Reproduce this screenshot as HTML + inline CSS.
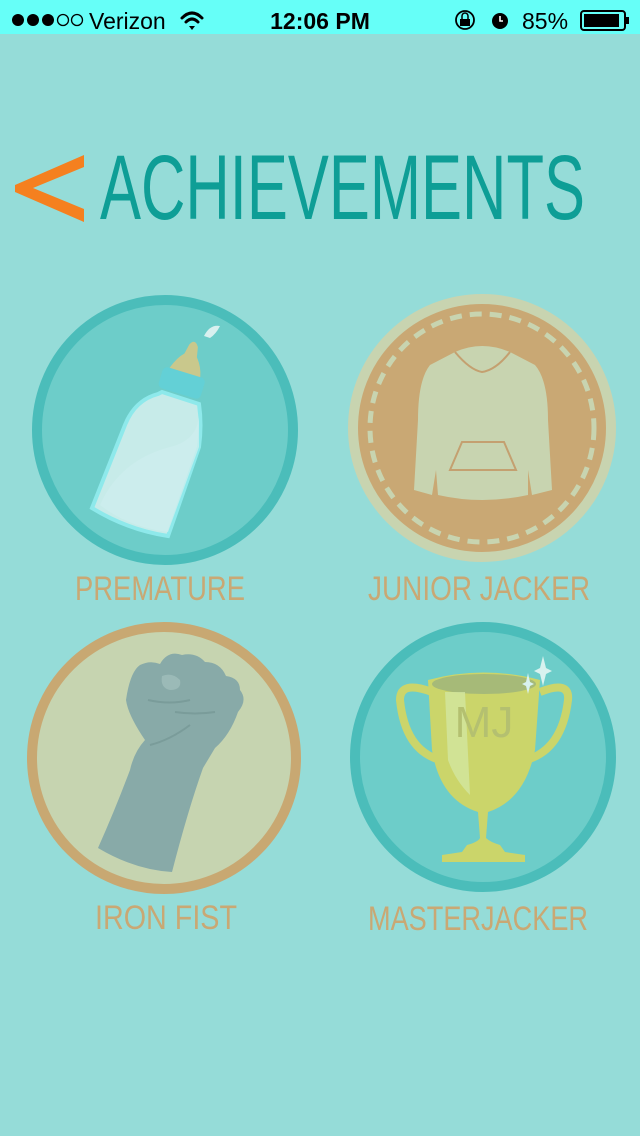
<!DOCTYPE html>
<html><head><meta charset="utf-8"><style>
html,body{margin:0;padding:0;width:640px;height:1136px;overflow:hidden;background:#95dcd8;font-family:"Liberation Sans",sans-serif}
</style></head><body>
<svg width="640" height="1136" viewBox="0 0 640 1136" xmlns="http://www.w3.org/2000/svg" style="position:absolute;left:0;top:0">
<rect x="0" y="0" width="640" height="1136" fill="#95dcd8"/>
<rect x="0" y="0" width="640" height="34" fill="#66fff8"/>
<g fill="#000">
<circle cx="18" cy="20" r="6"/><circle cx="33" cy="20" r="6"/><circle cx="48" cy="20" r="6"/>
</g>
<g fill="none" stroke="#000" stroke-width="1.3"><circle cx="63" cy="20" r="5.5"/><circle cx="77" cy="20" r="5.5"/></g>
<text x="89" y="29" font-size="23" fill="#000">Verizon</text>
<g fill="none" stroke="#000" stroke-width="3" stroke-linecap="round">
<path d="M182 18 Q192 8 202 18"/><path d="M186 22 Q192 16 198 22"/>
</g>
<path d="M189 26 L192 30 L195 26 Z" fill="#000"/>
<text x="320" y="29" font-size="23" font-weight="bold" fill="#000" text-anchor="middle">12:06 PM</text>
<circle cx="465" cy="20" r="9" fill="none" stroke="#000" stroke-width="1.8"/>
<rect x="460" y="19" width="10" height="7" fill="#000"/>
<path d="M462 19 V16 A3 3 0 0 1 468 16 V19" fill="none" stroke="#000" stroke-width="1.5"/>
<circle cx="500" cy="21" r="8" fill="#000"/>
<path d="M500 16 V21 H503" stroke="#fff" stroke-width="1.6" fill="none"/>
<text x="522" y="29" font-size="23" fill="#000">85%</text>
<rect x="581" y="11" width="44" height="19" rx="3" fill="none" stroke="#000" stroke-width="2"/>
<rect x="584" y="14" width="35" height="13" fill="#000"/>
<rect x="626" y="17" width="3" height="7" fill="#000"/>

<path d="M84 155 L84 167 L33 188 L84 209 L84 222 L15 192 L15 185 Z" fill="#f5801f"/>
<text x="100" y="219" font-size="92" fill="#0e9e96" textLength="485" lengthAdjust="spacingAndGlyphs">ACHIEVEMENTS</text>

<ellipse cx="165" cy="430" rx="128" ry="130" fill="#6dcdc9" stroke="#4bbdba" stroke-width="10"/>
<path d="M92 508 L125 425 Q135 400 158 394 L162 392 L199 404 Q202 425 199 447 L168 536 Q128 530 92 508 Z" fill="#c7ebe9" stroke="#8ee9eb" stroke-width="4"/>
<path d="M100 505 Q120 460 170 447 Q200 440 199 410 L199 447 L168 532 Q128 527 100 505Z" fill="#cdeeed" opacity="0.8"/>
<g transform="rotate(17 182 382)">
<rect x="160" y="372" width="44" height="22" rx="5" fill="#63d0d6"/>
<path d="M166 372 Q170 360 176 354 L178 344 Q182 336 187 344 L189 354 Q196 362 198 372 Z" fill="#c9c88c"/>
</g>
<path d="M204 336 Q210 324 220 326 Q216 334 210 338 Z" fill="#d8f0ef"/>
<text x="160" y="600" font-size="34" fill="#c9a874" text-anchor="middle" textLength="170" lengthAdjust="spacingAndGlyphs">PREMATURE</text>

<ellipse cx="482" cy="428" rx="129" ry="129" fill="#c9a874" stroke="#c8d4b0" stroke-width="10"/>
<ellipse cx="482" cy="428" rx="112" ry="114" fill="none" stroke="#c8d4b0" stroke-width="5" stroke-dasharray="12 8"/>
<path d="M455 352 Q482 340 510 352 L535 365 Q548 380 548 420 L552 490 L532 495 L528 470 L528 495 Q482 505 438 495 L436 470 L432 495 L414 490 L418 420 Q418 380 430 365 Z" fill="#c8d4b0"/>
<path d="M455 352 Q470 370 482 372 Q496 370 510 352" fill="none" stroke="#c4a070" stroke-width="2"/>
<path d="M450 470 L462 442 L504 442 L516 470 Z" fill="none" stroke="#c4a070" stroke-width="2"/>
<text x="479" y="600" font-size="34" fill="#c9a874" text-anchor="middle" textLength="222" lengthAdjust="spacingAndGlyphs">JUNIOR JACKER</text>

<ellipse cx="164" cy="758" rx="132" ry="131" fill="#c6d4b0" stroke="#c8a872" stroke-width="10"/>
<path d="M98 848 Q115 810 130 770 Q134 752 145 740 Q128 715 126 700 Q130 672 140 665 Q150 660 160 664 Q168 650 182 655 Q196 652 205 662 Q220 662 226 676 Q240 678 240 690 Q248 700 238 712 Q230 735 215 748 L203 768 Q188 810 172 872 Q135 870 98 848 Z" fill="#88aaa8"/>
<path d="M162 676 Q172 672 180 680 Q182 690 170 690 Q160 688 162 676Z" fill="#9bbab7"/>
<path d="M148 700 Q170 705 190 700 M175 712 Q195 715 215 712 M150 745 Q170 740 190 725" stroke="#7a9c9a" stroke-width="2" fill="none"/>
<text x="166" y="929" font-size="34" fill="#c9a874" text-anchor="middle" textLength="142" lengthAdjust="spacingAndGlyphs">IRON FIST</text>

<ellipse cx="483" cy="757" rx="128" ry="130" fill="#6dcdc9" stroke="#4bbdba" stroke-width="10"/>
<path d="M432 692 Q400 680 400 700 Q405 750 440 760 L448 775 M540 692 Q570 680 568 700 Q562 750 526 760 L518 775" fill="none" stroke="#cbd56a" stroke-width="8"/>
<path d="M428 680 Q483 665 540 680 L535 750 Q525 800 488 812 L486 838 Q490 842 500 845 L505 852 L525 855 L525 862 L442 862 L442 855 L462 852 L467 845 Q478 842 480 838 L478 812 Q440 800 432 750 Z" fill="#cbd56a"/>
<ellipse cx="484" cy="684" rx="52" ry="10" fill="#a6ba78"/>
<path d="M445 692 L465 692 L470 795 Q455 780 448 760 Z" fill="#d2e6a0" opacity="0.8"/>
<text x="484" y="737" font-size="44" fill="#b4c070" text-anchor="middle">MJ</text>
<path d="M543 656 L546 668 L552 671 L546 674 L543 686 L540 674 L534 671 L540 668Z M528 673 L530 682 L534 684 L530 686 L528 694 L526 686 L522 684 L526 682Z" fill="#d8f2ef"/>
<text x="478" y="930" font-size="34" fill="#c9a874" text-anchor="middle" textLength="220" lengthAdjust="spacingAndGlyphs">MASTERJACKER</text>
</svg>
</body></html>
